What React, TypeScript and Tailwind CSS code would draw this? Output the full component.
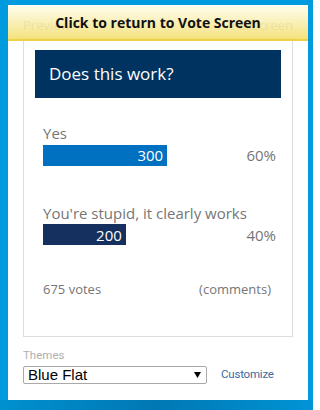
const options = [
  { label: 'Yes', votes: 300, color: 'bg-[#0070c0]' },
  { label: "You're stupid, it clearly works", votes: 200, color: 'bg-[#15305e]' },
]

const TRACK = 207
const TOTAL = 500

export default function App() {
  return (
    <div className="w-[313px] h-[410px] bg-[#009ade] overflow-hidden flex flex-col" style={{ fontFamily: '"Open Sans", sans-serif' }}>
      <div className="relative mt-[5px] ml-[8px] w-[300px] h-[395px] bg-white flex flex-col px-[15px]">
        {/* banner over the preview links */}
        <div className="absolute left-0 top-0 w-[300px] h-[36px] bg-gradient-to-b from-[#fffdea]/85 to-[#f2dd62]/85 border-b-2 border-[#ecd048] flex items-center justify-center">
          <span className="text-[14px] font-bold text-[#111]">Click to return to Vote Screen</span>
        </div>

        <div className="h-[33px] pt-[9px] flex items-center justify-between text-[13px] text-[#a8a8a8]">
          <span>Preview</span>
          <span>Fullscreen</span>
        </div>

        <div className="h-[299px] border border-[#dddddd] px-[11px] pt-[11px] flex flex-col">
          <div className="h-[48px] bg-[#003360] text-white text-[17px] pl-[14px] flex items-center">Does this work?</div>

          <div className="pl-[8px] pr-[5px]">
            {options.map((o, i) => (
              <div key={o.label} className={i === 0 ? 'mt-[25px]' : 'mt-[36px]'}>
                <div className="text-[15px] leading-[20px] text-[#767676]">{o.label}</div>
                <div className="mt-[1px] flex items-center justify-between">
                  <div
                    className={`${o.color} h-[21px] flex items-center justify-end pr-[4px] text-white text-[15px]`}
                    style={{ width: (o.votes / TOTAL) * TRACK }}
                  >
                    {o.votes}
                  </div>
                  <span className="text-[15px] text-[#767676]">{Math.round((o.votes / TOTAL) * 100)}%</span>
                </div>
              </div>
            ))}
            <div className="mt-[34px] flex justify-between pr-[5px] text-[13px] leading-[18px] text-[#767676]">
              <span>675 votes</span>
              <span>(comments)</span>
            </div>
          </div>
        </div>

        <div className="mt-[10px] text-[11.5px] leading-[16px] text-[#b0b0b0]" style={{ fontFamily: 'Roboto, sans-serif' }}>Themes</div>
        <div className="mt-[3px] flex items-center">
          <div className="w-[184px] h-[18px] border border-[#a9a9a9] rounded-[2px] flex items-center justify-between pl-[4px] pr-[5px] text-[15px] text-black" style={{ fontFamily: '"Liberation Sans", Arial, sans-serif' }}>
            <span>Blue Flat</span>
            <svg width="7" height="6" viewBox="0 0 7 6"><path d="M0 0h7L3.5 6z" fill="#000" /></svg>
          </div>
          <span className="ml-[14px] text-[11.5px] tracking-[-0.2px] text-[#3d6aa3]" style={{ fontFamily: 'Roboto, sans-serif' }}>Customize</span>
        </div>
      </div>
      <div className="flex-1 bg-gradient-to-r from-[#0090d0] via-[#0078b4] to-[#0094d6]" />
    </div>
  )
}
